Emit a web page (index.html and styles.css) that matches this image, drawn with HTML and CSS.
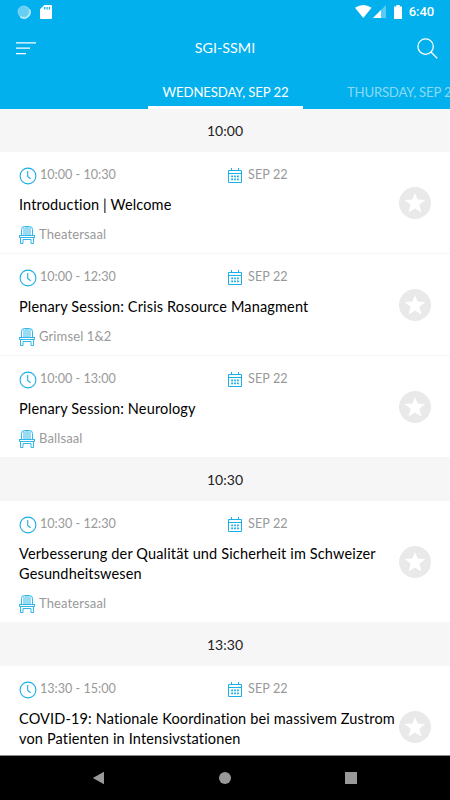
FILE: index.html
```html
<!DOCTYPE html>
<html lang="en">
<head>
<meta charset="utf-8">
<title>SGI-SSMI</title>
<link rel="stylesheet" href="styles.css">
</head>
<body>
<svg class="defs" aria-hidden="true">
  <symbol id="clock" viewBox="0 0 18 18"><circle cx="9" cy="9" r="7.9"/><path d="M8.7 4v5.5l2.9 2.3"/></symbol>
  <symbol id="calendar" viewBox="0 0 14 16">
    <path d="M.5 2.5h13v12H.5zM.5 5.5h13M3.5 0v3M10.5 0v3"/>
    <path class="dots" d="M3.2 7.4h1.8v1.8h-1.8zM6.1 7.4h1.8v1.8H6.1zM9 7.4h1.8v1.8H9zM3.2 10.4h1.8v1.8h-1.8zM6.1 10.4h1.8v1.8H6.1zM9 10.4h1.8v1.8H9z"/>
  </symbol>
  <symbol id="chair" viewBox="0 0 16 18">
    <path d="M2.5 9V3.5Q2.5.5 5.5.5h5Q13.5.5 13.5 3.5V9M5 9V1.5M7 9V1M9 9V1M11 9V1.5M.5 9.5h15M.5 9v2.5h15V9M1.5 11.5v6h2.5v-4h8v4h2.5v-6"/>
  </symbol>
  <symbol id="star" viewBox="0 0 32 32"><circle cx="16" cy="16" r="16"/><path d="M16 6l2.6 6.4 7.7.5-5.9 4.9 2 7.8-6.4-4.2-6.4 4.2 2-7.8-5.9-4.9 7.7-.5z"/></symbol>
</svg>
<div class="screen">
  <header class="header">
    <div class="status">
      <svg class="spinner" viewBox="0 0 14 14"><circle cx="7" cy="7" r="6.2" fill="#fff" fill-opacity=".4"/><path d="M12.5 4.3A6.1 6.1 0 0 1 3.2 11.8" fill="none" stroke="#fff" stroke-opacity=".75" stroke-width="1.2"/><circle cx="6.5" cy="6.5" r="5.6" fill="none" stroke="#fff" stroke-opacity=".4" stroke-dasharray="1 1"/></svg>
      <svg class="sdcard" viewBox="0 0 12 14"><path d="M4.3 0H11q1 0 1 1v12q0 1-1 1H1q-1 0-1-1V4.3z" fill="#fff"/><path d="M4.8 2v2.4M7.1 2v2.4M9.4 2v2.4" stroke="#02b0ed" stroke-width="1.2"/></svg>
      <div class="status-right">
        <svg class="wifi" viewBox="0 0 17 13"><path d="M0 2.7Q8.5-2.6 16.6 2.7L8.3 13z" fill="#fff"/></svg>
        <svg class="signal" viewBox="0 0 13 13"><path d="M13 0v13H0z" fill="#fff" fill-opacity=".35"/><path d="M8 5v8H0z" fill="#fff"/></svg>
        <svg class="battery" viewBox="0 0 8 14"><path d="M2.3 0h3.4v1.4H8V14H0V1.4h2.3z" fill="#fff"/></svg>
        <span class="clock-text">6:40</span>
      </div>
    </div>
    <div class="toolbar">
      <svg class="menu" viewBox="0 0 20 13"><path d="M0 .8h20M0 6.2h14M0 11.6h10" stroke="#fff" stroke-width="1.3"/></svg>
      <h1>SGI-SSMI</h1>
      <svg class="search" viewBox="0 0 21 21"><circle cx="8.6" cy="8.6" r="7.7"/><path d="M14.2 14.2l6 6"/></svg>
    </div>
    <nav class="tabs">
      <span class="tab active">WEDNESDAY, SEP 22</span>
      <span class="tab">THURSDAY, SEP 23</span>
    </nav>
  </header>
  <main class="list">
    <h2>10:00</h2>
    <article>
      <div class="meta"><svg class="clock"><use href="#clock"/></svg><span class="time">10:00 - 10:30</span><svg class="calendar"><use href="#calendar"/></svg><span class="date">SEP 22</span></div>
      <h3>Introduction | Welcome</h3>
      <div class="place"><svg class="chair"><use href="#chair"/></svg><span>Theatersaal</span></div>
      <svg class="star"><use href="#star"/></svg>
    </article>
    <article>
      <div class="meta"><svg class="clock"><use href="#clock"/></svg><span class="time">10:00 - 12:30</span><svg class="calendar"><use href="#calendar"/></svg><span class="date">SEP 22</span></div>
      <h3>Plenary Session: Crisis Rosource Managment</h3>
      <div class="place"><svg class="chair"><use href="#chair"/></svg><span>Grimsel 1&amp;2</span></div>
      <svg class="star"><use href="#star"/></svg>
    </article>
    <article>
      <div class="meta"><svg class="clock"><use href="#clock"/></svg><span class="time">10:00 - 13:00</span><svg class="calendar"><use href="#calendar"/></svg><span class="date">SEP 22</span></div>
      <h3>Plenary Session: Neurology</h3>
      <div class="place"><svg class="chair"><use href="#chair"/></svg><span>Ballsaal</span></div>
      <svg class="star"><use href="#star"/></svg>
    </article>
    <h2>10:30</h2>
    <article>
      <div class="meta"><svg class="clock"><use href="#clock"/></svg><span class="time">10:30 - 12:30</span><svg class="calendar"><use href="#calendar"/></svg><span class="date">SEP 22</span></div>
      <h3>Verbesserung der Qualität und Sicherheit im Schweizer<br>Gesundheitswesen</h3>
      <div class="place"><svg class="chair"><use href="#chair"/></svg><span>Theatersaal</span></div>
      <svg class="star"><use href="#star"/></svg>
    </article>
    <h2>13:30</h2>
    <article>
      <div class="meta"><svg class="clock"><use href="#clock"/></svg><span class="time">13:30 - 15:00</span><svg class="calendar"><use href="#calendar"/></svg><span class="date">SEP 22</span></div>
      <h3>COVID-19: Nationale Koordination bei massivem Zustrom<br>von Patienten in Intensivstationen</h3>
      <div class="place"></div>
      <svg class="star"><use href="#star"/></svg>
    </article>
  </main>
  <footer class="navbar">
    <svg viewBox="0 0 14 14"><path d="M12 .8v12.4L.8 7z"/></svg>
    <svg viewBox="0 0 14 14"><circle cx="7" cy="7" r="6"/></svg>
    <svg viewBox="0 0 14 14"><path d="M1 1h12v12H1z"/></svg>
  </footer>
</div>
</body>
</html>
```
FILE: styles.css
```css
* { box-sizing: border-box; }
body { margin: 0; font-family: Lato, "Liberation Sans", sans-serif; background: #fff; }
h1, h2, h3 { margin: 0; font-weight: 400; }
svg { display: block; flex: none; }
.defs { position: absolute; width: 0; height: 0; }
.screen { width: 450px; height: 800px; display: flex; flex-direction: column; overflow: hidden; }

.header { flex: none; height: 109px; background: #02b0ed; color: #fff; }
.status { height: 23px; display: flex; align-items: center; padding: 0 16px 0 17px; }
.spinner { width: 14px; height: 14px; }
.sdcard { width: 12px; height: 14px; margin-left: 9px; }
.status-right { margin-left: auto; display: flex; align-items: center; }
.wifi { width: 17px; height: 13px; }
.signal { width: 13px; height: 13px; margin-left: 1px; }
.battery { width: 8px; height: 14px; margin: 0 7px 0 8px; }
.clock-text { font: 500 13px/23px Roboto, sans-serif; letter-spacing: -.1px; }
.toolbar { height: 50px; display: flex; align-items: center; padding: 0 12px 0 16px; }
.menu { width: 20px; height: 13px; }
h1 { flex: 1; padding-right: 3px; font-size: 14.3px; line-height: 20px; text-align: center; letter-spacing: 0; }
.search { width: 21px; height: 21px; fill: none; stroke: #fff; stroke-width: 1.3; }
.tabs { height: 36px; display: flex; padding-left: 148px; white-space: nowrap; overflow: hidden; }
.tab { flex: none; height: 36px; line-height: 39px; font-size: 13.2px; letter-spacing: -.22px; color: rgba(255,255,255,.55); }
.tab.active { width: 155px; margin-right: 44px; text-align: center; color: #fff; border-bottom: 3px solid #fff; letter-spacing: -.15px; }

.list { flex: 1; min-height: 0; overflow: hidden; }
h2 { height: 42.5px; line-height: 43px; background: #f6f6f6; font-size: 14px; text-align: center; color: #222; letter-spacing: .05px; }
h2:first-child { height: 43px; }
article {
  position: relative;
  height: 102px;
  padding: 15px 50px 9px 19px;
  border-bottom: 1px solid #f6f6f6;
}
article:has(br) { height: 122.5px; }
.meta { height: 18px; display: flex; color: #999; font-size: 12.6px; line-height: 18px; }
.clock, .calendar, .chair { fill: none; stroke: #1aafe8; }
.clock { width: 18px; height: 18px; stroke-width: 1.1; }
.time { width: 191px; padding-left: 3px; letter-spacing: 0; }
.calendar { width: 14px; height: 16px; margin-top: 1px; stroke-width: 1; }
.dots { fill: #1aafe8; stroke: none; }
.date { padding-left: 6px; letter-spacing: .1px; }
h3 { margin-top: 10px; font-size: 14.5px; line-height: 20.5px; color: #000; white-space: nowrap; letter-spacing: .15px; }
.time, .date { margin-top: -1px; }
.place { height: 18px; margin-top: 10.5px; display: flex; color: #999; font-size: 13px; line-height: 18px; }
.place span { margin-top: -1px; padding-left: 4px; letter-spacing: .12px; }
.chair { width: 16px; height: 18px; stroke-width: .9; }
.star { position: absolute; right: 19px; top: calc(50% - 15.5px); width: 32px; height: 32px; }
#star circle { fill: #e9e9e9; }
#star path { fill: #fff; }

.navbar { flex: none; height: 45px; background: #000; border-top: 1px solid #888; display: flex; justify-content: center; align-items: center; gap: 112px; }
.navbar svg { width: 14px; height: 14px; fill: #999; }
```
